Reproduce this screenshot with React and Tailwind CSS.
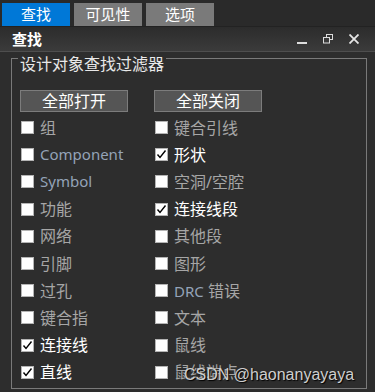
import React from "react";

const cjk = { fontFamily: '"Noto Sans", "Noto Sans CJK SC", sans-serif' };

const leftItems = [
    { label: "组", checked: false },
    { label: "Component", checked: false, latin: true },
    { label: "Symbol", checked: false, latin: true },
    { label: "功能", checked: false },
    { label: "网络", checked: false },
    { label: "引脚", checked: false },
    { label: "过孔", checked: false },
    { label: "键合指", checked: false },
    { label: "连接线", checked: true },
    { label: "直线", checked: true },
];

const rightItems = [
    { label: "键合引线", checked: false },
    { label: "形状", checked: true },
    { label: "空洞/空腔", checked: false },
    { label: "连接线段", checked: true },
    { label: "其他段", checked: false },
    { label: "图形", checked: false },
    { label: "DRC 错误", checked: false, drc: true },
    { label: "文本", checked: false },
    { label: "鼠线", checked: false },
    { label: "鼠线端点", checked: false },
];

const CheckBox = ({ checked }) => (
    <span className="w-[13px] h-[13px] shrink-0 bg-white border border-[#b4b4b4] flex items-center justify-center">
        {checked && (
            <svg width="11" height="11" viewBox="0 0 11 11">
                <path d="M1.5 5.5 L4 8.5 L9.5 1.5" fill="none" stroke="#000" strokeWidth="1.4" />
            </svg>
        )}
    </span>
);

const Row = ({ item }) => {
    const color = item.checked ? "text-white" : "text-[#a6a6a6]";
    return (
        <div className="h-[27.2px] flex items-center pl-[1px] gap-[6px]">
            <CheckBox checked={item.checked} />
            {item.latin ? (
                <span className="text-[15px] text-[#94a3b8] leading-none">{item.label}</span>
            ) : item.drc ? (
                <span className={`text-[16px] leading-none ${color}`}>
                    <span className="text-[15px] text-[#94a3b8]">DRC</span> 错误
                </span>
            ) : (
                <span className={`text-[16px] leading-none ${color}`}>{item.label}</span>
            )}
        </div>
    );
};

const App = () => {
    return (
        <div className="relative w-[375px] h-[392px] overflow-hidden bg-[#2d2d2d]" style={cjk}>
            {/* tab strip */}
            <div className="h-[27px] bg-[#2a2a2a] flex items-start pt-[3px] pl-[2px] gap-[4px] border-b border-[#222]">
                <div className="w-[68px] h-[23px] bg-[#0078d7] text-white text-[15px] flex items-center justify-center">查找</div>
                <div className="w-[68px] h-[23px] bg-[#7a7a7a] text-white text-[15px] flex items-center justify-center">可见性</div>
                <div className="w-[68px] h-[23px] bg-[#7a7a7a] text-white text-[15px] flex items-center justify-center">选项</div>
            </div>

            {/* title bar */}
            <div className="h-[25px] bg-gradient-to-b from-[#2c2c2c] to-[#3b3b3b] border-b border-[#4e4e4e] flex items-center pl-[12px] pr-[16px]">
                <span className="text-white font-bold text-[15px] leading-none">查找</span>
                <div className="ml-auto flex items-center gap-[16px]">
                    <svg width="10" height="10" viewBox="0 0 10 10">
                        <rect x="0" y="8" width="10" height="2" fill="#dcdcdc" />
                    </svg>
                    <svg width="10" height="10" viewBox="0 0 10 10">
                        <rect x="3.5" y="0.5" width="6" height="5" fill="none" stroke="#dcdcdc" />
                        <rect x="0.5" y="3.5" width="6" height="5.5" fill="#3a3a3a" stroke="#dcdcdc" />
                    </svg>
                    <svg width="10" height="10" viewBox="0 0 10 10">
                        <path d="M0.5 0.5 L9.5 9.5 M9.5 0.5 L0.5 9.5" stroke="#e6e6e6" strokeWidth="1.8" />
                    </svg>
                </div>
            </div>

            {/* group box */}
            <div className="relative ml-[11px] mr-[8px] mt-[6px] h-[331px] border border-[#7a7a7a] pl-[8px] pt-[31px]">
                <span className="absolute left-[6px] top-[-4px] px-[2px] bg-[#2d2d2d] text-[16px] leading-[18px] text-[#e8e8e8]">
                    设计对象查找过滤器
                </span>
                <div className="grid grid-cols-[134px_1fr]">
                    <button className="w-[108px] h-[22px] bg-[#555555] border border-[#7c7c7c] text-white text-[16px] leading-none">
                        全部打开
                    </button>
                    <button className="w-[108px] h-[22px] bg-[#555555] border border-[#7c7c7c] text-white text-[16px] leading-none">
                        全部关闭
                    </button>
                    <div className="flex flex-col mt-[2px]">
                        {leftItems.map((item) => (
                            <Row key={item.label} item={item} />
                        ))}
                    </div>
                    <div className="flex flex-col mt-[2px]">
                        {rightItems.map((item) => (
                            <Row key={item.label} item={item} />
                        ))}
                    </div>
                </div>
            </div>

            {/* watermark */}
            <span
                className="absolute left-[184px] top-[365px] text-[16px] leading-[20px] text-[#cfcfcf] [text-shadow:1px_1px_1px_#000]"
                style={{ fontFamily: '"Liberation Sans", Arial, sans-serif' }}
            >
                CSDN @haonanyayaya
            </span>
        </div>
    );
};

export default App;
